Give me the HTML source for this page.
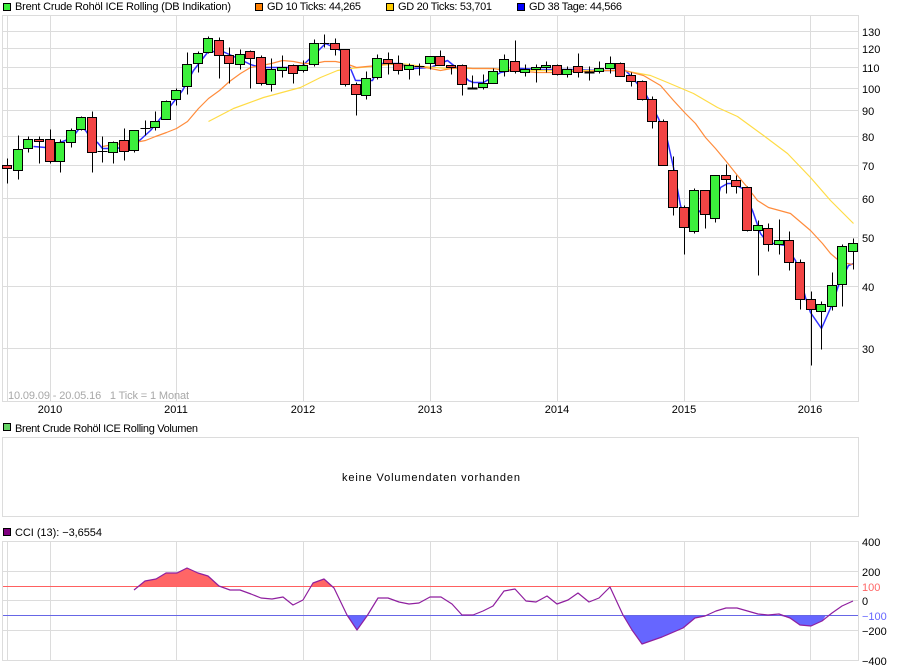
<!DOCTYPE html>
<html>
<head>
<meta charset="utf-8">
<title>Brent Crude</title>
<style>
html,body{margin:0;padding:0;background:#fff;width:900px;height:670px;overflow:hidden}
svg{display:block}
text{font-family:"Liberation Sans",Arial,sans-serif;font-size:11px;fill:#000}
.g{fill:none;stroke:#dcdcdc;stroke-width:1;shape-rendering:crispEdges}
.l{fill:none;stroke-width:1.2;stroke-linejoin:round}
.w{fill:none;stroke:#000;stroke-width:1;shape-rendering:crispEdges}
.u rect{fill:#3cf03c;stroke:#000;shape-rendering:crispEdges}
.d rect{fill:#f24444;stroke:#000;shape-rendering:crispEdges}
</style>
</head>
<body>
<svg xmlns="http://www.w3.org/2000/svg" width="900" height="670" viewBox="0 0 900 670">
<defs>
<clipPath id="ca"><rect x="0" y="540" width="860" height="46"/></clipPath>
<clipPath id="cb"><rect x="0" y="616" width="860" height="46"/></clipPath>
</defs>
<rect width="900" height="670" fill="#fff"/>

<!-- legend -->
<g shape-rendering="crispEdges" stroke="#000">
<rect x="3.5" y="3.5" width="7" height="7" fill="#3cf03c"/>
<rect x="255.5" y="3.5" width="7" height="7" fill="#ff7f00"/>
<rect x="386.5" y="3.5" width="7" height="7" fill="#ffcc00"/>
<rect x="517.5" y="3.5" width="7" height="7" fill="#0000ff"/>
<rect x="3.5" y="423.5" width="7" height="7" fill="#66d466"/>
<rect x="3.5" y="528.5" width="7" height="7" fill="#800080"/>
</g>
<text x="15" y="10" textLength="216">Brent Crude Rohöl ICE Rolling (DB Indikation)</text>
<text x="267" y="10" textLength="94">GD 10 Ticks: 44,265</text>
<text x="398" y="10" textLength="94">GD 20 Ticks: 53,701</text>
<text x="529" y="10" textLength="93">GD 38 Tage: 44,566</text>

<!-- main grid -->
<g transform="translate(.5 .5)">
<path class="g" d="M2 15H858V401H2ZM7 15V401M50 15V401M176 15V401M303 15V401M430 15V401M557 15V401M684 15V401M810 15V401M2 31H858M2 48H858M2 67H858M2 88H858M2 110H858M2 136H858M2 165H858M2 198H858M2 237H858M2 286H858M2 348H858"/>

<!-- moving averages -->
<polyline class="l" stroke="#3030ff" stroke-width="1.5" style="stroke-width:1.5" points="33,146 45,147 65,140 75,133 81,125 85,130 92,140 97,142 102,148 113,148 124,147 134,147 139,140 150,130 168,108 182,90 193,70 207,52 220,50 240,59 250,64 260,67 277,67 300,67 318,50 325,43 340,50 350,68 355,80 372,80 380,63 400,63 413,68 430,67 447,60 457,68 468,80 473,82 483,82 500,72 520,68 540,69 570,69 600,70 625,70 630,75 645,93 658,118 667,140 673,167 680,205 686,222 700,210 712,215 720,187 727,183 732,183 742,188 752,210 760,233 767,242 785,245 795,260 805,297 810,312 821,328 832,303 838,285 848,265 853,263"/>
<polyline class="l" stroke="#ffdc46" points="208,121 233,108 263,97 300,87 320,77 337,70 350,68 370,66 400,63 423,66 447,68 487,68 533,70 600,70 623,70 650,75 667,82 693,93 717,107 737,116 763,135 787,153 810,177 830,200 838,208 853,223"/>
<polyline class="l" stroke="#ff8c3c" points="102,146 113,144 134,142 145,140 155,136 166,132 176,128 187,121 198,108 208,98 219,90 229,81 240,73 250,67 261,65 271,63 282,60 293,61 303,63 314,63 324,61 335,61 345,63 356,67 366,66 377,65 388,63 398,65 409,66 419,66 430,68 440,70 451,68 462,67 472,68 483,68 493,68 504,70 515,70 525,71 536,72 546,72 557,72 567,71 578,71 589,71 599,70 624,70 643,75 660,85 673,100 685,113 695,123 705,137 715,148 725,160 737,175 747,187 757,200 768,207 790,213 810,230 822,243 830,253 837,259 847,263 853,264"/>

<!-- wicks -->
<path class="w" d="M7 158V183M18 135V179M28 136V152M39 136V163M50 129V163M60 139V172M71 128V147M81 116V130M92 111V172M102 136V162M113 141V163M124 128V160M134 130V152M145 120V135M155 111V130M166 100V119M176 88V105M187 52V94M198 51V72M208 36V53M219 37V78M229 47V83M240 49V69M250 50V88M261 55V85M271 58V91M282 55V77M293 64V83M303 60V72M314 39V66M324 34V47M335 38V55M345 49V86M356 82V115M366 71V99M377 54V79M388 52V74M398 55V74M409 63V79M419 63V75M430 56V69M440 50V65M451 65V74M462 64V95M472 75V88M483 74V89M493 68V83M504 54V76M515 40V73M525 64V76M536 64V82M546 61V72M557 64V75M567 66V77M578 53V77M589 66V80M599 61V73M610 56V73M620 62V76M631 72V86M642 80V100M652 96V128M663 119V165M673 156V215M684 205V254M694 188V233M705 190V228M715 175V222M726 164V193M736 175V193M747 186V231M758 220V275M768 223V251M779 219V254M789 231V270M800 259V309M811 291V365M821 301V349M832 272V310M842 244V306M853 238V269"/>
<!-- doji -->
<path class="w" d="M97 151H107M140 128H150M319 43H329M414 66H424"/>
<path class="w" d="M467 88H477M584 72H594" style="stroke-width:2"/>

<!-- rising bodies -->
<g class="u">
<rect x="13" y="149" width="9" height="21"/>
<rect x="23" y="139" width="9" height="9"/>
<rect x="55" y="142" width="9" height="19"/>
<rect x="66" y="130" width="9" height="12"/>
<rect x="76" y="117" width="9" height="12"/>
<rect x="108" y="142" width="9" height="10"/>
<rect x="129" y="130" width="9" height="20"/>
<rect x="150" y="121" width="9" height="6"/>
<rect x="161" y="101" width="9" height="18"/>
<rect x="171" y="90" width="9" height="9"/>
<rect x="182" y="64" width="9" height="22"/>
<rect x="193" y="53" width="9" height="10"/>
<rect x="203" y="38" width="9" height="14"/>
<rect x="235" y="54" width="9" height="10"/>
<rect x="266" y="69" width="9" height="15"/>
<rect x="277" y="67" width="9" height="3"/>
<rect x="298" y="65" width="9" height="5"/>
<rect x="309" y="43" width="9" height="21"/>
<rect x="361" y="78" width="9" height="17"/>
<rect x="372" y="58" width="9" height="19"/>
<rect x="404" y="65" width="9" height="4"/>
<rect x="425" y="56" width="9" height="7"/>
<rect x="478" y="83" width="9" height="4"/>
<rect x="488" y="71" width="9" height="12"/>
<rect x="499" y="59" width="9" height="12"/>
<rect x="520" y="69" width="9" height="3"/>
<rect x="531" y="67" width="9" height="2"/>
<rect x="541" y="65" width="9" height="2"/>
<rect x="562" y="69" width="9" height="5"/>
<rect x="594" y="68" width="9" height="3"/>
<rect x="605" y="63" width="9" height="5"/>
<rect x="689" y="190" width="9" height="41"/>
<rect x="710" y="175" width="9" height="43"/>
<rect x="753" y="225" width="9" height="5"/>
<rect x="774" y="240" width="9" height="4"/>
<rect x="816" y="304" width="9" height="7"/>
<rect x="827" y="285" width="9" height="21"/>
<rect x="837" y="246" width="9" height="38"/>
<rect x="848" y="243" width="9" height="8"/>
</g>
<!-- falling bodies -->
<g class="d">
<rect x="2" y="165" width="9" height="3"/>
<rect x="34" y="139" width="9" height="2"/>
<rect x="45" y="139" width="9" height="22"/>
<rect x="87" y="117" width="9" height="35"/>
<rect x="119" y="140" width="9" height="11"/>
<rect x="214" y="40" width="9" height="15"/>
<rect x="224" y="55" width="9" height="8"/>
<rect x="245" y="51" width="9" height="7"/>
<rect x="256" y="57" width="9" height="26"/>
<rect x="288" y="65" width="9" height="8"/>
<rect x="330" y="43" width="9" height="6"/>
<rect x="340" y="49" width="9" height="35"/>
<rect x="351" y="84" width="9" height="10"/>
<rect x="383" y="59" width="9" height="4"/>
<rect x="393" y="63" width="9" height="7"/>
<rect x="435" y="56" width="9" height="9"/>
<rect x="446" y="65" width="9" height="2"/>
<rect x="457" y="65" width="9" height="19"/>
<rect x="510" y="61" width="9" height="10"/>
<rect x="552" y="65" width="9" height="9"/>
<rect x="573" y="66" width="9" height="6"/>
<rect x="615" y="63" width="9" height="13"/>
<rect x="626" y="75" width="9" height="6"/>
<rect x="637" y="81" width="9" height="18"/>
<rect x="647" y="99" width="9" height="22"/>
<rect x="658" y="121" width="9" height="44"/>
<rect x="668" y="170" width="9" height="37"/>
<rect x="679" y="207" width="9" height="20"/>
<rect x="700" y="190" width="9" height="24"/>
<rect x="721" y="175" width="9" height="4"/>
<rect x="731" y="180" width="9" height="6"/>
<rect x="742" y="187" width="9" height="43"/>
<rect x="763" y="228" width="9" height="16"/>
<rect x="784" y="240" width="9" height="22"/>
<rect x="795" y="262" width="9" height="37"/>
<rect x="806" y="299" width="9" height="10"/>
</g>

<!-- volume panel -->
<path class="g" d="M2 437H858V516H2Z"/>

<!-- CCI panel -->
<path class="g" d="M2 541H858V660H2ZM7 541V660M50 541V660M176 541V660M303 541V660M430 541V660M557 541V660M684 541V660M810 541V660M2 571H858M2 600H858M2 630H858"/>
</g>

<!-- CCI fills -->
<polygon clip-path="url(#ca)" fill="#ff6666" points="134,590 145,581 156,579 166,573 177,573 187,568 198,573 208,576 219,586 230,590 240,590 251,594 261,598 272,599 283,597 293,605 303,600 313,583 324,579 334,588 347,615 357,630 367,616 378,598 388,598 399,602 409,604 419,603 430,597 441,597 452,604 462,615 473,615 483,611 493,606 504,591 515,589 526,601 536,602 547,596 557,604 568,600 578,593 589,602 599,598 610,587 853,601 853,586.5 134,586.5"/>
<polygon clip-path="url(#cb)" fill="#6666ff" points="134,615.5 347,615.5 357,630.5 367,615.5 623,615.5 632,630 642,644 662,637 683,628 695,618 705,616 779,615.5 790,618 800,625 811,626 822,621 826,615.5 853,615.5"/>
<path d="M3 586.5H858" stroke="#ff6060" stroke-width="1" shape-rendering="crispEdges"/>
<path d="M3 615.5H858" stroke="#6666e6" stroke-width="1" shape-rendering="crispEdges"/>
<polyline class="l" stroke="#8f1f9f" points="134,590 145,581 156,579 166,573 177,573 187,568 198,573 208,576 219,586 230,590 240,590 251,594 261,598 272,599 283,597 293,605 303,600 313,583 324,579 334,588 347,615 357,630 367,616 378,598 388,598 399,602 409,604 419,603 430,597 441,597 452,604 462,615 473,615 483,611 493,606 504,591 515,589 526,601 536,602 547,596 557,604 568,600 578,593 589,602 599,598 610,587 623,615 632,630 642,644 662,637 683,628 695,618 705,616 716,611 726,608 737,608 758,614 768,615 779,614 790,618 800,625 811,626 822,621 832,613 842,606 853,601"/>

<!-- date note -->
<text x="8" y="399" style="fill:#a8a8a8" textLength="181" xml:space="preserve">10.09.09 - 20.05.16   1 Tick = 1 Monat</text>

<!-- y axis -->
<text x="862" y="36">130</text>
<text x="862" y="53">120</text>
<text x="862" y="72">110</text>
<text x="862" y="93">100</text>
<text x="862" y="115">90</text>
<text x="862" y="141">80</text>
<text x="862" y="170">70</text>
<text x="862" y="203">60</text>
<text x="862" y="242">50</text>
<text x="862" y="291">40</text>
<text x="862" y="353">30</text>

<!-- x axis -->
<g text-anchor="middle">
<text x="50" y="413">2010</text>
<text x="176" y="413">2011</text>
<text x="303" y="413">2012</text>
<text x="430" y="413">2013</text>
<text x="557" y="413">2014</text>
<text x="684" y="413">2015</text>
<text x="810" y="413">2016</text>
</g>

<text x="15" y="432" textLength="183">Brent Crude Rohöl ICE Rolling Volumen</text>
<text x="342" y="481" textLength="178">keine Volumendaten vorhanden</text>
<text x="15" y="536" textLength="87">CCI (13): −3,6554</text>

<!-- CCI axis -->
<text x="862" y="546">400</text>
<text x="862" y="576">200</text>
<text x="862" y="591" style="fill:#ff6666">100</text>
<text x="862" y="605">0</text>
<text x="862" y="620" style="fill:#6666ff">−100</text>
<text x="862" y="635">−200</text>
<text x="862" y="665">−400</text>
</svg>
</body>
</html>
